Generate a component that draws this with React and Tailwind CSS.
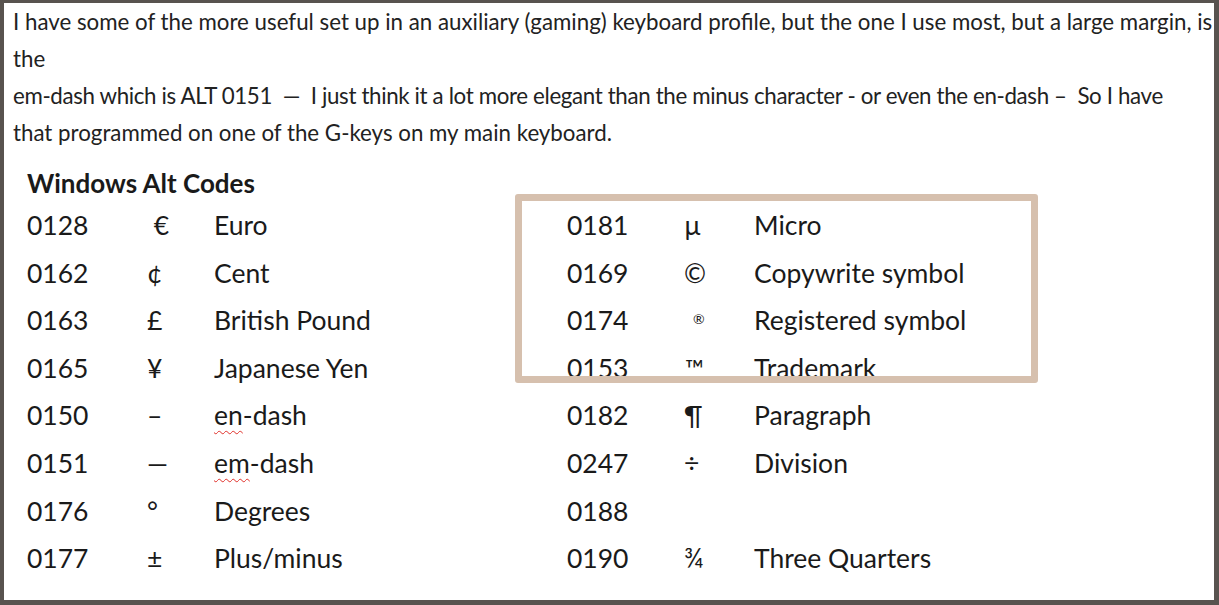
import React from "react";

const left = [
  ["0128", "\u00a0€", "Euro"],
  ["0162", "¢", "Cent"],
  ["0163", "£", "British Pound"],
  ["0165", "¥", "Japanese Yen"],
  ["0150", "–", "en-dash", "en"],
  ["0151", "—", "em-dash", "em"],
  ["0176", "°", "Degrees"],
  ["0177", "±", "Plus/minus"],
];
const right = [
  ["0181", "µ", "Micro"],
  ["0169", "©", "Copywrite symbol"],
  ["0174", "®", "Registered symbol"],
  ["0153", "™", "Trademark"],
  ["0182", "¶", "Paragraph"],
  ["0247", "÷", "Division"],
  ["0188", "", ""],
  ["0190", "¾", "Three Quarters"],
];

function Name({ row }) {
  if (row[3]) {
    const rest = row[2].slice(row[3].length);
    return (
      <span>
        <span className="underline decoration-wavy decoration-[#e0302a] decoration-1 underline-offset-[5px]">{row[3]}</span>
        {rest}
      </span>
    );
  }
  return <span>{row[2]}</span>;
}

function Sym({ s }) {
  if (s === "®") {
    return <span className="text-[14px] relative -top-[6px] left-[9px]">{s}</span>;
  }
  if (s === "™") {
    return <span className="text-[25px] relative left-[1px]">{s}</span>;
  }
  return <span>{s}</span>;
}

export default function App() {
  return (
    <div className="w-[1219px] h-[605px] bg-white border-t-[3px] border-l-4 border-r-[5px] border-b-[5px] border-[#58534f] relative overflow-hidden">
      <div
        className="pl-[9px] text-[22.3px] leading-[37px] text-[#222] whitespace-nowrap"
        style={{ fontFamily: "Lato, 'Open Sans', sans-serif" }}
      >
        <div>I have some of the more useful set up in an auxiliary (gaming) keyboard profile, but the one I use most, but a large margin, is</div>
        <div>the</div>
        <div className="tracking-[-0.35px]">em-dash which is ALT 0151&nbsp; —&nbsp; I just think it a lot more elegant than the minus character - or even the en-dash –&nbsp; So I have</div>
        <div>that programmed on one of the G-keys on my main keyboard.</div>
      </div>
      <div
        className="pl-[23px] text-[#1a1a1a]"
        style={{ fontFamily: "Lato, 'Noto Sans', sans-serif" }}
      >
        <div className="mt-[14px] text-[26px] leading-[36px] font-bold">Windows Alt Codes</div>
        <div className="grid grid-cols-[120px_67px_353px_117px_70px_1fr] text-[26.5px] mt-[1px]">
          {left.map((l, i) => {
            const r = right[i];
            return (
              <React.Fragment key={i}>
                <div className="h-[47.6px] leading-[47.6px]">{l[0]}</div>
                <div className="h-[47.6px] leading-[47.6px]"><Sym s={l[1]} /></div>
                <div className="h-[47.6px] leading-[47.6px]"><Name row={l} /></div>
                <div className="h-[47.6px] leading-[47.6px]">{r[0]}</div>
                <div className="h-[47.6px] leading-[47.6px]"><Sym s={r[1]} /></div>
                <div className="h-[47.6px] leading-[47.6px]"><Name row={r} /></div>
              </React.Fragment>
            );
          })}
        </div>
      </div>
      <div className="absolute left-[511px] top-[191px] w-[523px] h-[189px] border-[7px] border-[#d6c0ae] rounded-[3px]" />
    </div>
  );
}
